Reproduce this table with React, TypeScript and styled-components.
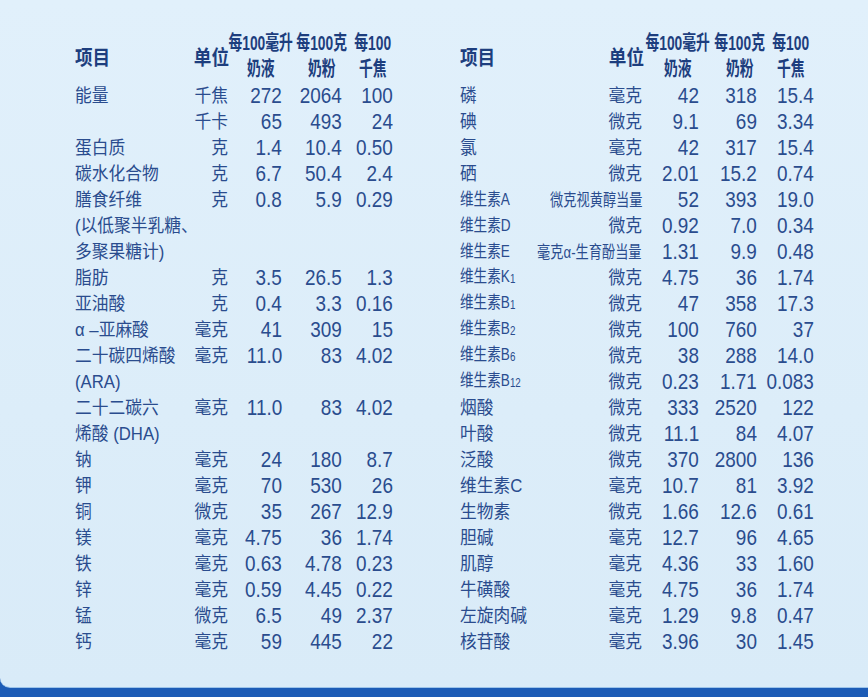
import React from 'react';
import styled, { createGlobalStyle } from 'styled-components';

const GlobalStyle = createGlobalStyle`
    html, body {
        margin: 0;
        padding: 0;
        background: #1d5cb6;
    }
    body {
        font-family: "Liberation Sans", "Noto Sans CJK SC", sans-serif;
    }
`;

const Page = styled.div`
    width: 868px;
    height: 697px;
    background: #1d5cb6;
`;

const Panel = styled.div`
    height: 688px;
    box-sizing: border-box;
    padding: 29px 0 0 75px;
    display: flex;
    gap: 65px;
    background: linear-gradient(180deg, #e1f0fb 0%, #dcedf9 60%, #d9ebf8 100%);
    border-bottom: 1px solid #9cc4ea;
    border-bottom-left-radius: 10px;
    color: #2a4c8e;
`;

const Table = styled.div`
    display: flex;
    flex-direction: column;
`;

const HeadGrid = styled.div<{ $cols: string }>`
    display: grid;
    grid-template-columns: ${(p) => p.$cols};
    height: 54px;
    align-items: center;
    color: #1d3e7e;
    font-weight: bold;
`;

const HeadLabel = styled.div<{ $align: 'start' | 'end' }>`
    justify-self: ${(p) => p.$align};
    font-family: "Noto Sans CJK SC", sans-serif;
    font-size: 20px;
    font-weight: bold;
    transform: scaleX(0.88);
    transform-origin: ${(p) => (p.$align === 'start' ? 'left' : 'right')} center;
    white-space: nowrap;
`;

const HeadCol = styled.div`
    justify-self: center;
    display: flex;
    flex-direction: column;
    align-items: center;
    font-family: "Liberation Sans", "Noto Sans CJK SC", sans-serif;
    font-size: 20px;
    line-height: 26px;
    font-weight: bold;
    transform: scaleX(0.69);
    white-space: nowrap;
`;

const BodyGrid = styled.div<{ $cols: string }>`
    display: grid;
    grid-template-columns: ${(p) => p.$cols};
    grid-auto-rows: 26px;
    align-items: center;
`;

const Name = styled.div<{ $small?: boolean }>`
    grid-column: 1;
    font-size: ${(p) => (p.$small ? '17px' : '18px')};
    white-space: nowrap;
    line-height: 26px;
    transform: ${(p) => (p.$small ? 'scaleX(0.8)' : 'scaleX(0.93)')};
    transform-origin: left center;
`;

const Unit = styled.div<{ $small?: boolean }>`
    grid-column: 2;
    justify-self: end;
    font-size: ${(p) => (p.$small ? '16.5px' : '18px')};
    white-space: nowrap;
    line-height: 26px;
    transform: ${(p) => (p.$small ? 'scaleX(0.8)' : 'scaleX(0.93)')};
    transform-origin: right center;
`;

const Num = styled.div`
    justify-self: end;
    font-size: 21.5px;
    line-height: 26px;
    white-space: nowrap;
    transform: scaleX(0.88);
    transform-origin: right center;
`;

const Sub = styled.span`
    font-size: 0.72em;
    vertical-align: -1px;
`;

type Row = {
    name?: React.ReactNode;
    unit?: string;
    vals?: [string, string, string];
    smallName?: boolean;
    smallUnit?: boolean;
};

const leftRows: Row[] = [
    { name: '能量', unit: '千焦', vals: ['272', '2064', '100'] },
    { unit: '千卡', vals: ['65', '493', '24'] },
    { name: '蛋白质', unit: '克', vals: ['1.4', '10.4', '0.50'] },
    { name: '碳水化合物', unit: '克', vals: ['6.7', '50.4', '2.4'] },
    { name: '膳食纤维', unit: '克', vals: ['0.8', '5.9', '0.29'] },
    { name: '(以低聚半乳糖、' },
    { name: '多聚果糖计)' },
    { name: '脂肪', unit: '克', vals: ['3.5', '26.5', '1.3'] },
    { name: '亚油酸', unit: '克', vals: ['0.4', '3.3', '0.16'] },
    { name: 'α –亚麻酸', unit: '毫克', vals: ['41', '309', '15'] },
    { name: '二十碳四烯酸', unit: '毫克', vals: ['11.0', '83', '4.02'] },
    { name: '(ARA)' },
    { name: '二十二碳六', unit: '毫克', vals: ['11.0', '83', '4.02'] },
    { name: '烯酸 (DHA)' },
    { name: '钠', unit: '毫克', vals: ['24', '180', '8.7'] },
    { name: '钾', unit: '毫克', vals: ['70', '530', '26'] },
    { name: '铜', unit: '微克', vals: ['35', '267', '12.9'] },
    { name: '镁', unit: '毫克', vals: ['4.75', '36', '1.74'] },
    { name: '铁', unit: '毫克', vals: ['0.63', '4.78', '0.23'] },
    { name: '锌', unit: '毫克', vals: ['0.59', '4.45', '0.22'] },
    { name: '锰', unit: '微克', vals: ['6.5', '49', '2.37'] },
    { name: '钙', unit: '毫克', vals: ['59', '445', '22'] },
];

const vit = (letter: string, sub?: string) => (
    <>
        维生素{letter}
        {sub && <Sub>{sub}</Sub>}
    </>
);

const rightRows: Row[] = [
    { name: '磷', unit: '毫克', vals: ['42', '318', '15.4'] },
    { name: '碘', unit: '微克', vals: ['9.1', '69', '3.34'] },
    { name: '氯', unit: '毫克', vals: ['42', '317', '15.4'] },
    { name: '硒', unit: '微克', vals: ['2.01', '15.2', '0.74'] },
    { name: vit('A'), smallName: true, unit: '微克视黄醇当量', smallUnit: true, vals: ['52', '393', '19.0'] },
    { name: vit('D'), smallName: true, unit: '微克', vals: ['0.92', '7.0', '0.34'] },
    { name: vit('E'), smallName: true, unit: '毫克α-生育酚当量', smallUnit: true, vals: ['1.31', '9.9', '0.48'] },
    { name: vit('K', '1'), smallName: true, unit: '微克', vals: ['4.75', '36', '1.74'] },
    { name: vit('B', '1'), smallName: true, unit: '微克', vals: ['47', '358', '17.3'] },
    { name: vit('B', '2'), smallName: true, unit: '微克', vals: ['100', '760', '37'] },
    { name: vit('B', '6'), smallName: true, unit: '微克', vals: ['38', '288', '14.0'] },
    { name: vit('B', '12'), smallName: true, unit: '微克', vals: ['0.23', '1.71', '0.083'] },
    { name: '烟酸', unit: '微克', vals: ['333', '2520', '122'] },
    { name: '叶酸', unit: '微克', vals: ['11.1', '84', '4.07'] },
    { name: '泛酸', unit: '微克', vals: ['370', '2800', '136'] },
    { name: '维生素C', unit: '毫克', vals: ['10.7', '81', '3.92'] },
    { name: '生物素', unit: '微克', vals: ['1.66', '12.6', '0.61'] },
    { name: '胆碱', unit: '毫克', vals: ['12.7', '96', '4.65'] },
    { name: '肌醇', unit: '毫克', vals: ['4.36', '33', '1.60'] },
    { name: '牛磺酸', unit: '毫克', vals: ['4.75', '36', '1.74'] },
    { name: '左旋肉碱', unit: '毫克', vals: ['1.29', '9.8', '0.47'] },
    { name: '核苷酸', unit: '毫克', vals: ['3.96', '30', '1.45'] },
];

const NutrientTable: React.FC<{ rows: Row[]; headCols: string; bodyCols: string }> = ({
    rows,
    headCols,
    bodyCols,
}) => (
    <Table>
        <HeadGrid $cols={headCols}>
            <HeadLabel $align="start">项目</HeadLabel>
            <HeadLabel $align="end">单位</HeadLabel>
            <HeadCol>
                <span>每100毫升</span>
                <span>奶液</span>
            </HeadCol>
            <HeadCol>
                <span>每100克</span>
                <span>奶粉</span>
            </HeadCol>
            <HeadCol>
                <span>每100</span>
                <span>千焦</span>
            </HeadCol>
        </HeadGrid>
        <BodyGrid $cols={bodyCols}>
            {rows.map((r, i) => (
                <React.Fragment key={i}>
                    <Name $small={r.smallName} style={{ gridRow: i + 1 }}>
                        {r.name}
                    </Name>
                    {r.unit && (
                        <Unit $small={r.smallUnit} style={{ gridRow: i + 1 }}>
                            {r.unit}
                        </Unit>
                    )}
                    {r.vals?.map((v, j) => (
                        <Num key={j} style={{ gridRow: i + 1, gridColumn: j + 3 }}>
                            {v}
                        </Num>
                    ))}
                </React.Fragment>
            ))}
        </BodyGrid>
    </Table>
);

const App: React.FC = () => {
    return (
        <Page>
            <GlobalStyle />
            <Panel>
                <NutrientTable
                    rows={leftRows}
                    headCols="116px 38px 64px 58px 44px"
                    bodyCols="115px 38px 54px 60px 51px"
                />
                <NutrientTable
                    rows={rightRows}
                    headCols="146px 38px 68px 56px 46px"
                    bodyCols="82px 100px 57px 58px 57px"
                />
            </Panel>
        </Page>
    );
};

export default App;
